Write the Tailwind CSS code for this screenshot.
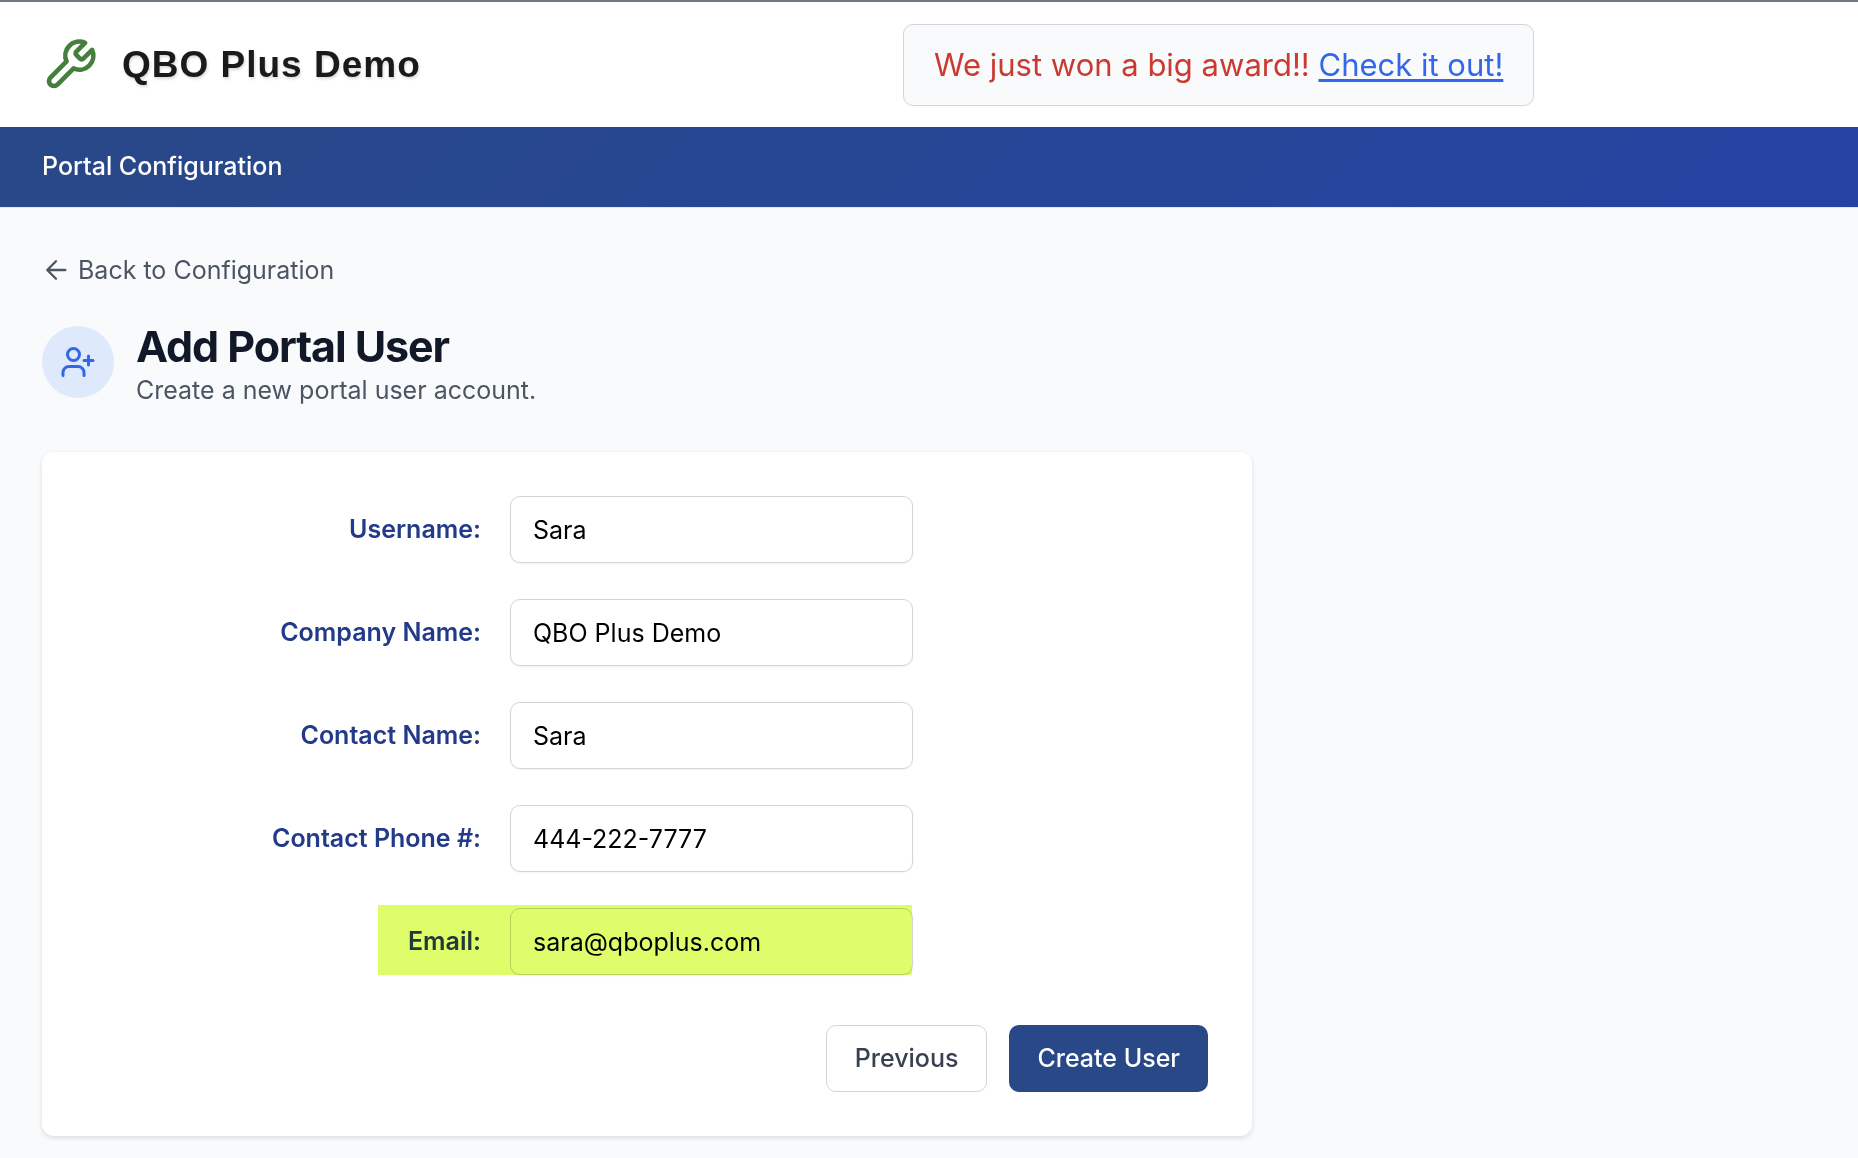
<!DOCTYPE html>
<html lang="en">
<head>
<meta charset="utf-8">
<meta name="viewport" content="width=device-width, initial-scale=1">
<title>Add Portal User</title>
<script src="https://cdn.jsdelivr.net/npm/@tailwindcss/browser@4"></script>
</head>
<body class="min-h-screen bg-[#f9fafc] font-['Inter',sans-serif] text-[25px] text-[#4b5563]">
<header class="flex h-[127px] items-center border-t-2 border-[#6f7881] bg-white pr-[94px] pl-[42px]">
  <div class="flex flex-1 items-center gap-6">
    <svg class="size-14 text-[#467f3d]" viewBox="0 0 24 24" fill="none" stroke="currentColor" stroke-width="2" stroke-linecap="round" stroke-linejoin="round" aria-hidden="true"><path d="M14.7 6.3a1 1 0 0 0 0 1.4l1.6 1.6a1 1 0 0 0 1.4 0l3.77-3.77a6 6 0 0 1-7.94 7.94l-6.91 6.91a2.12 2.12 0 0 1-3-3l6.91-6.91a6 6 0 0 1 7.94-7.94l-3.76 3.76z"/></svg>
    <span class="font-['Liberation_Sans_Narrow','Liberation_Sans',sans-serif] text-[37px] font-bold tracking-[1px] whitespace-nowrap text-[#1a1a1a] text-shadow-[1px_2px_3px_rgb(0_0_0/0.15)]">QBO Plus Demo</span>
  </div>
  <div class="flex flex-1">
    <p class="rounded-[10px] border border-[#d1d5db] bg-[#f9fafc] px-[30px] py-[17px] text-[31px] leading-[46px] whitespace-nowrap text-[#cb3a31]">We just won a big award!! <a href="#" class="text-[#3366e8] underline decoration-[3px] underline-offset-3">Check it out!</a></p>
  </div>
</header>
<nav class="flex h-20 items-center bg-linear-135 from-[#294887] to-[#2543a3] px-[42px] font-medium text-white">
  <a href="#">Portal Configuration</a>
</nav>
<main class="border-t border-[#e5e7eb] px-[42px] pt-11 pb-6">
  <a href="#" class="flex items-center gap-2 leading-9">
    <svg class="size-7" viewBox="0 0 24 24" fill="none" stroke="currentColor" stroke-width="2" stroke-linecap="round" stroke-linejoin="round" aria-hidden="true"><path d="M20 12H5M12 4.500l-7.500 7.500 7.500 7.500"/></svg>
    Back to Configuration
  </a>
  <div class="mt-8 flex gap-[22px]">
    <div class="mt-1.5 flex size-[72px] items-center justify-center rounded-full bg-[#dee9fc] text-[#3366e8]">
      <svg class="size-9" viewBox="0 0 24 24" fill="none" stroke="currentColor" stroke-width="2" stroke-linecap="round" stroke-linejoin="round" aria-hidden="true"><path d="M16 21v-2a4 4 0 0 0-4-4H6a4 4 0 0 0-4 4v2M19 8v6M22 11h-6"/><circle cx="9" cy="7" r="4"/></svg>
    </div>
    <div>
      <h1 class="text-[43px] leading-[52px] font-bold tracking-tight text-[#111827]">Add Portal User</h1>
      <p class="leading-9">Create a new portal user account.</p>
    </div>
  </div>
  <form class="mt-11 flex max-w-[1210px] flex-col gap-9 rounded-xl bg-white p-11 shadow-[0_2px_5px_rgb(0_0_0/0.12)]">
    <div class="grid grid-cols-[395px_403px] items-center gap-[29px]">
      <label for="username" class="text-right font-semibold text-[#233a88]">Username:</label>
      <input id="username" type="text" value="Sara" class="h-[67px] rounded-[10px] border border-[#d1d5db] bg-white px-[22px] text-black shadow-xs">
    </div>
    <div class="grid grid-cols-[395px_403px] items-center gap-[29px]">
      <label for="company" class="text-right font-semibold text-[#233a88]">Company Name:</label>
      <input id="company" type="text" value="QBO Plus Demo" class="h-[67px] rounded-[10px] border border-[#d1d5db] bg-white px-[22px] text-black shadow-xs">
    </div>
    <div class="grid grid-cols-[395px_403px] items-center gap-[29px]">
      <label for="contact" class="text-right font-semibold text-[#233a88]">Contact Name:</label>
      <input id="contact" type="text" value="Sara" class="h-[67px] rounded-[10px] border border-[#d1d5db] bg-white px-[22px] text-black shadow-xs">
    </div>
    <div class="grid grid-cols-[395px_403px] items-center gap-[29px]">
      <label for="phone" class="text-right font-semibold text-[#233a88]">Contact Phone #:</label>
      <input id="phone" type="tel" value="444-222-7777" class="h-[67px] rounded-[10px] border border-[#d1d5db] bg-white px-[22px] text-black shadow-xs">
    </div>
    <div class="relative grid grid-cols-[395px_403px] items-center gap-[29px]">
      <label for="email" class="text-right font-semibold text-[#233a88]">Email:</label>
      <input id="email" type="email" value="sara@qboplus.com" class="h-[67px] rounded-[10px] border border-[#d1d5db] bg-white px-[22px] text-black shadow-xs">
      <div class="pointer-events-none absolute -top-[3px] left-[292px] h-[70px] w-[534px] bg-[#dffd6a] mix-blend-multiply"></div>
    </div>
    <div class="mt-[14px] flex justify-end gap-[22px] font-medium">
      <button type="button" class="h-[67px] rounded-[10px] border border-[#d1d5db] bg-white px-7 text-[#374151]">Previous</button>
      <button type="submit" class="h-[67px] rounded-[10px] bg-[#294887] px-7 text-white">Create User</button>
    </div>
  </form>
</main>
</body>
</html>
